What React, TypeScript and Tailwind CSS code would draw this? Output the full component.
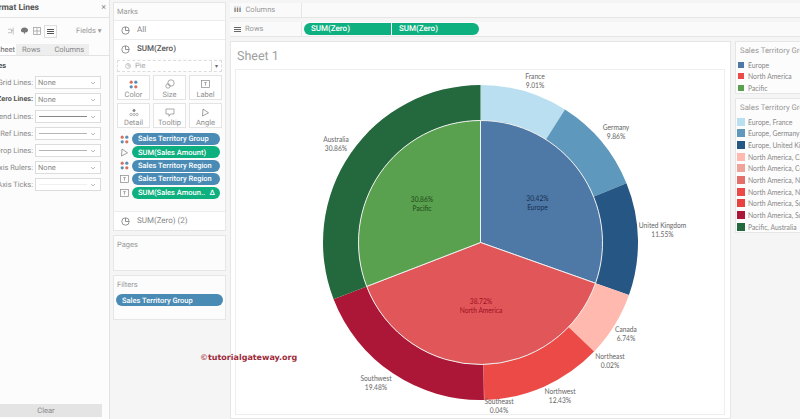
import React from "react";

const font = { fontFamily: '"Roboto","Liberation Sans",sans-serif' };
const narrow = { fontFamily: '"Lato","Roboto",sans-serif' };
const cx = 480.5, cy = 242.5, Ro = 157.5, Ri = 122;

function pt(r: number, pct: number): [number, number] {
  const a = (pct / 100) * 2 * Math.PI;
  return [cx + r * Math.sin(a), cy - r * Math.cos(a)];
}
function ring(p0: number, p1: number, r0: number, r1: number) {
  const [ax, ay] = pt(r1, p0);
  const [bx, by] = pt(r1, p1);
  const large = p1 - p0 > 50 ? 1 : 0;
  if (r0 === 0) return `M${cx} ${cy}L${ax} ${ay}A${r1} ${r1} 0 ${large} 1 ${bx} ${by}Z`;
  const [cx2, cy2] = pt(r0, p1);
  const [dx, dy] = pt(r0, p0);
  return `M${ax} ${ay}A${r1} ${r1} 0 ${large} 1 ${bx} ${by}L${cx2} ${cy2}A${r0} ${r0} 0 ${large} 0 ${dx} ${dy}Z`;
}

const outer: [number, number, string][] = [
  [0, 9.01, "#b9dff0"],
  [9.01, 18.87, "#5f98bd"],
  [18.87, 30.42, "#265683"],
  [30.42, 37.16, "#ffb9ae"],
  [37.16, 37.18, "#e46f6a"],
  [37.18, 49.61, "#ec4a47"],
  [49.61, 49.65, "#e8413f"],
  [49.65, 69.13, "#ad1737"],
  [69.13, 100, "#24683d"],
];
const inner: [number, number, string][] = [
  [0, 30.42, "#4e79a7"],
  [30.42, 69.14, "#e15759"],
  [69.14, 100, "#59a14f"],
];
const labels: [number, number, string, string][] = [
  [535, 76, "France", "9.01%"],
  [616, 127, "Germany", "9.86%"],
  [662.5, 225, "United Kingdom", "11.55%"],
  [626, 329, "Canada", "6.74%"],
  [610, 356, "Northeast", "0.02%"],
  [560, 391, "Northwest", "12.43%"],
  [499, 401, "Southeast", "0.04%"],
  [376, 378, "Southwest", "19.48%"],
  [336, 139, "Australia", "30.86%"],
];
const innerLabels: [number, number, string, string, string][] = [
  [422, 199, "30.86%", "Pacific", "#1f4a1a"],
  [537.5, 198, "30.42%", "Europe", "#16304f"],
  [481, 301, "38.72%", "North America", "#a01020"],
];

function ChartLabel({ x, y, a, b, fill }: { x: number; y: number; a: string; b: string; fill: string }) {
  return (
    <text transform={`translate(${x} 0) scale(0.83 1)`} textAnchor="middle" fontSize="8" fill={fill} style={narrow}>
      <tspan x="0" y={y + 3}>{a}</tspan>
      <tspan x="0" y={y + 12}>{b}</tspan>
    </text>
  );
}

function Clock() {
  return (
    <svg width="9" height="9" viewBox="0 0 9 9" fill="none" stroke="#888" strokeWidth="0.9">
      <circle cx="4.5" cy="4.5" r="3.7" />
      <path d="M4.5 4.5V1M4.5 4.5H8" />
    </svg>
  );
}
function Dots() {
  return (
    <svg width="9" height="9" viewBox="0 0 9 9">
      <circle cx="2.2" cy="2.2" r="1.6" fill="#d9705f" />
      <circle cx="6.8" cy="2.2" r="1.6" fill="#5b8db5" />
      <circle cx="2.2" cy="6.8" r="1.6" fill="#5b8db5" />
      <circle cx="6.8" cy="6.8" r="1.6" fill="#d9705f" />
    </svg>
  );
}
function AngleIcon({ size = 9 }: { size?: number }) {
  return (
    <svg width={size} height={size} viewBox="0 0 9 9" fill="none" stroke="#888" strokeWidth="0.8">
      <path d="M2 1L7.5 4.8L1.5 8Z" />
    </svg>
  );
}
function LabelIcon({ w = 9, h = 8 }: { w?: number; h?: number }) {
  return (
    <svg width={w} height={h} viewBox="0 0 9 8" fill="none" stroke="#888" strokeWidth="0.7">
      <rect x="0.5" y="0.5" width="8" height="7" />
      <path d="M3.2 2.6H5.8M4.5 2.6V5.6" />
    </svg>
  );
}
function Chevron() {
  return (
    <svg width="6" height="4" viewBox="0 0 6 4" fill="none" stroke="#aaa" strokeWidth="0.8" className="ml-auto mr-1">
      <path d="M1 1L3 3L5 1" />
    </svg>
  );
}

function FormatRow({ label, kind, bold }: { label: string; kind: string; bold?: boolean }) {
  return (
    <div className="flex items-center h-[13px] mb-[4px]">
      <div className={`w-[33px] shrink-0 whitespace-nowrap flex justify-end ${bold ? "text-[7.2px] font-bold text-[#555]" : "text-[7.5px] text-[#8a8a8a]"}`}>
        {label}
      </div>
      <div className="ml-[2px] w-[66px] h-[13px] bg-white border border-[#dcdcdc] flex items-center pl-[2px] text-[7.5px] text-[#888]">
        {kind === "none" && <span>None</span>}
        {kind === "dark" && <span className="block w-[48px] h-px bg-[#888] ml-[1px]" />}
        {kind === "mid" && <span className="block w-[48px] h-px bg-[#b5b5b5] ml-[1px]" />}
        {kind === "light" && <span className="block w-[48px] h-px bg-[#f0f0f0] ml-[1px]" />}
        <Chevron />
      </div>
    </div>
  );
}

function MarkCard({ label, icon }: { label: string; icon: React.ReactNode }) {
  return (
    <div className="h-[25px] border border-[#e4e4e4] bg-white flex flex-col items-center pt-[3px] text-[7.5px] text-[#8f8f8f] leading-none gap-[2px]">
      <div className="h-[10px] flex items-center">{icon}</div>
      <div>{label}</div>
    </div>
  );
}

function Pill({ color, icon, label, suffix }: { color: "blue" | "green"; icon: React.ReactNode; label: string; suffix?: string }) {
  return (
    <div className="flex items-center h-[12px] mb-[1.4px]">
      <div className="w-[18px] pl-[6px] shrink-0 flex">{icon}</div>
      <div className={`w-[88px] h-[12px] rounded-full text-white text-[7.5px] font-medium pl-[6px] pr-[5px] flex items-center justify-between leading-none whitespace-nowrap ${color === "blue" ? "bg-[#4a8bb5]" : "bg-[#0fb07f]"}`}>
        <span>{label}</span>
        {suffix && <span>{suffix}</span>}
      </div>
    </div>
  );
}

function LegendRow({ color, label, small }: { color: string; label: string; small?: boolean }) {
  return (
    <div className="flex items-center h-[11.67px] whitespace-nowrap">
      <span className={small ? "w-[6px] h-[6px] ml-[2px] mr-[4px] shrink-0" : "w-[8px] h-[8px] ml-[1px] mr-[3px] shrink-0"} style={{ background: color }} />
      <span className="origin-left scale-x-[0.85]">{label}</span>
    </div>
  );
}

export default function App() {
  return (
    <div className="relative w-[800px] h-[419px] overflow-hidden bg-[#f5f5f5] flex text-[#777] [text-rendering:geometricPrecision]" style={font}>
      {/* Format pane */}
      <div className="w-[110px] shrink-0 h-full bg-[#fcfcfc] border-r border-[#e3e3e3] flex flex-col overflow-hidden">
        <div className="h-[18px] flex items-center justify-between border-b border-[#e3e3e3] pr-[3px]">
          <span className="ml-[-11px] text-[8.5px] font-bold text-[#555] whitespace-nowrap">Format Lines</span>
          <span className="text-[9px] text-[#888] leading-none">×</span>
        </div>
        <div className="h-[26px] flex items-center text-[#999] pl-[8px]">
          <svg width="6" height="8" viewBox="0 0 7 8" fill="none" stroke="#aaa" strokeWidth="0.8">
            <path d="M0 2H4V6H0M4 3.5H6M6 0V8" />
          </svg>
          <svg className="ml-[6px]" width="9" height="10" viewBox="0 0 10 10" fill="#777">
            <path d="M5 1C2.5 1 1 2.5 1 4.5C1 6 2.5 6.5 4 6.5L5 8.5L6 6.5H8L9 4C8.6 2 7 1 5 1Z" />
          </svg>
          <svg className="ml-[4px]" width="8" height="8" viewBox="0 0 8 8" fill="none" stroke="#999" strokeWidth="0.7">
            <rect x="0.5" y="0.5" width="7" height="7" />
            <path d="M4 0.5V7.5M0.5 4H7.5" />
          </svg>
          <div className="ml-[3px] w-[13px] h-[13px] border border-[#ddd] flex flex-col items-center justify-center gap-[1px]">
            <span className="block w-[7px] h-px bg-[#555]" />
            <span className="block w-[7px] h-px bg-[#555]" />
            <span className="block w-[7px] h-px bg-[#555]" />
          </div>
          <span className="ml-[19px] text-[7.5px] whitespace-nowrap">Fields ▾</span>
        </div>
        <div className="h-[12px] flex border-b border-[#e3e3e3] text-[7.5px] text-[#888] leading-none pr-[20px]">
          <div className="w-[16px] bg-white flex items-center justify-end pr-[1px] overflow-hidden">
            <span className="text-[#666]">Sheet</span>
          </div>
          <div className="flex-1 bg-[#eeeeee] flex items-center pl-[6px] gap-[14px]">
            <span>Rows</span>
            <span>Columns</span>
          </div>
        </div>
        <div className="h-[20px] flex items-center">
          <span className="ml-[-12px] text-[7.5px] font-bold text-[#555]">Lines</span>
        </div>
        <div className="flex flex-col">
          <FormatRow label="Grid Lines:" kind="none" />
          <FormatRow label="Zero Lines:" kind="none" bold />
          <FormatRow label="Trend Lines:" kind="dark" />
          <FormatRow label="Ref Lines:" kind="mid" />
          <FormatRow label="Drop Lines:" kind="mid" />
          <FormatRow label="Axis Rulers:" kind="none" />
          <FormatRow label="Axis Ticks:" kind="light" />
        </div>
        <div className="mt-auto mb-[2px] h-[13px] w-[102px] bg-[#e4e4e4] flex items-center justify-center pr-[10px] text-[7.5px] text-[#8a8a8a]">
          Clear
        </div>
      </div>

      {/* Marks column */}
      <div className="w-[119px] shrink-0 pl-[3px] pr-[3px] pt-[2px] flex flex-col gap-[4px]">
        <div className="h-[229px] bg-[#fcfcfc] border border-[#e6e6e6] flex flex-col">
          <div className="h-[17px] flex items-center pl-[3px] text-[7.5px] text-[#999]">Marks</div>
          <div className="h-[19px] border-t border-[#ececec] flex items-center pl-[7px] gap-[7px] text-[8px] text-[#888] bg-white">
            <Clock />
            <span>All</span>
          </div>
          <div className="h-[19px] border-t border-[#ececec] flex items-center pl-[7px] gap-[7px] text-[8px] font-medium text-[#555] bg-white">
            <Clock />
            <span>SUM(Zero)</span>
          </div>
          <div className="mx-[3px] mt-[2px] h-[12px] bg-white border border-dashed border-[#ddd] flex items-center pl-[7px] gap-[4px] text-[7.5px] text-[#aaa]">
            <svg width="6" height="6" viewBox="0 0 9 9" fill="none" stroke="#aaa" strokeWidth="1">
              <circle cx="4.5" cy="4.5" r="3.7" />
              <path d="M4.5 4.5V1M4.5 4.5H8" />
            </svg>
            <span>Pie</span>
            <span className="ml-auto w-[10px] h-full border-l border-[#ddd] flex items-center justify-center text-[6px] text-[#666]">▾</span>
          </div>
          <div className="mx-[3px] mt-[3px] grid grid-cols-3 gap-x-[3px] gap-y-[3px]">
            <MarkCard label="Color" icon={<Dots />} />
            <MarkCard
              label="Size"
              icon={
                <svg width="10" height="10" viewBox="0 0 10 10" fill="none" stroke="#888" strokeWidth="0.7">
                  <circle cx="6" cy="4" r="3.2" />
                  <circle cx="3" cy="7" r="2.2" />
                </svg>
              }
            />
            <MarkCard label="Label" icon={<LabelIcon />} />
            <MarkCard
              label="Detail"
              icon={
                <svg width="10" height="9" viewBox="0 0 10 9" fill="none" stroke="#888" strokeWidth="0.6">
                  <circle cx="5" cy="2.5" r="1.2" fill="#888" />
                  <circle cx="2" cy="6.5" r="1.2" />
                  <circle cx="5" cy="6.5" r="1.2" />
                  <circle cx="8" cy="6.5" r="1.2" />
                </svg>
              }
            />
            <MarkCard
              label="Tooltip"
              icon={
                <svg width="10" height="9" viewBox="0 0 10 9" fill="none" stroke="#888" strokeWidth="0.7">
                  <path d="M1 1H9V6H5.5L4 8.3V6H1Z" />
                </svg>
              }
            />
            <MarkCard label="Angle" icon={<AngleIcon />} />
          </div>
          <div className="mt-[5px] flex flex-col">
            <Pill color="blue" icon={<Dots />} label="Sales Territory Group" />
            <Pill color="green" icon={<AngleIcon />} label="SUM(Sales Amount)" />
            <Pill color="blue" icon={<Dots />} label="Sales Territory Region" />
            <Pill color="blue" icon={<LabelIcon />} label="Sales Territory Region" />
            <Pill color="green" icon={<LabelIcon />} label="SUM(Sales Amoun.." suffix="Δ" />
          </div>
          <div className="mt-auto h-[19px] border-t border-[#ececec] flex items-center pl-[7px] gap-[7px] text-[8px] text-[#888] bg-white">
            <Clock />
            <span>SUM(Zero) (2)</span>
          </div>
        </div>
        <div className="h-[36px] bg-[#fcfcfc] border border-[#e6e6e6] pl-[3px] pt-[3px] text-[7.5px] text-[#999]">Pages</div>
        <div className="h-[45px] bg-[#fcfcfc] border border-[#e6e6e6] px-[2px] pt-[3px] text-[7.5px] text-[#999]">
          <div className="pl-[1px]">Filters</div>
          <div className="mt-[4px] h-[12px] rounded-full bg-[#4a8bb5] text-white text-[7.5px] font-medium pl-[6px] flex items-center leading-none whitespace-nowrap">
            Sales Territory Group
          </div>
        </div>
      </div>

      {/* Main */}
      <div className="flex-1 min-w-0 pt-[3px] pl-[1px] flex flex-col">
        <div className="h-[15px] bg-[#fafafa] border-b border-[#e6e6e6] flex items-center text-[7.5px] text-[#999]">
          <div className="w-[72px] h-full border-r border-[#e6e6e6] flex items-center pl-[4px] gap-[4px]">
            <span className="font-bold text-[#666] tracking-[0.5px]">iii</span>
            <span>Columns</span>
          </div>
        </div>
        <div className="mt-[4px] h-[15px] bg-[#fafafa] border-b border-[#e6e6e6] flex items-center text-[7.5px] text-[#999]">
          <div className="w-[72px] h-full border-r border-[#e6e6e6] flex items-center pl-[4px] gap-[4px]">
            <div className="flex flex-col gap-[1px]">
              <span className="block w-[7px] h-px bg-[#666]" />
              <span className="block w-[7px] h-px bg-[#666]" />
              <span className="block w-[7px] h-px bg-[#666]" />
            </div>
            <span>Rows</span>
          </div>
          <div className="ml-[2px] flex gap-px text-white text-[8px] font-medium">
            <div className="w-[87px] h-[12px] bg-[#0fb07f] rounded-l-full pl-[7px] flex items-center">SUM(Zero)</div>
            <div className="w-[87px] h-[12px] bg-[#0fb07f] rounded-r-full pl-[7px] flex items-center">SUM(Zero)</div>
          </div>
        </div>
        <div className="mt-[4px] flex-1 min-h-0 flex">
          <div className="w-[501px] shrink-0 h-full bg-white border border-[#e6e6e6] flex flex-col pl-[4px] pr-[5px] pb-[3px]">
            <div className="h-[27px] flex items-center pt-[3px] pl-[2px] text-[12.5px] text-[#a0a0a0] leading-none">Sheet 1</div>
            <div className="flex-1 border border-[#eeeeee] relative">
              <svg className="absolute left-[-1px] top-[-1px]" width="492" height="348" viewBox="235 69 492 348">
                {outer.map(([a, b, c]) => (
                  <path key={a} d={ring(a, b, Ri, Ro)} fill={c} />
                ))}
                {inner.map(([a, b, c]) => (
                  <path key={a} d={ring(a, b, 0, Ri)} fill={c} stroke="#eeeeee" strokeWidth="1" />
                ))}
                {labels.map(([x, y, a, b]) => (
                  <ChartLabel key={a} x={x} y={y} a={a} b={b} fill="#666" />
                ))}
                {innerLabels.map(([x, y, a, b, c]) => (
                  <ChartLabel key={b} x={x} y={y} a={a} b={b} fill={c} />
                ))}
              </svg>
            </div>
          </div>
          <div className="flex-1 min-w-0 pl-[4px] flex flex-col gap-[4px] text-[#888] overflow-hidden">
            <div className="h-[53px] bg-[#fcfcfc] border border-[#e6e6e6] border-r-0 pt-[3px]">
              <div className="h-[11px] pl-[4px] flex items-center whitespace-nowrap text-[7.8px] text-[#999]">Sales Territory Group</div>
              <div className="mt-[3px] text-[8px]" style={narrow}>
                <LegendRow small color="#4e79a7" label="Europe" />
                <LegendRow small color="#ec4a47" label="North America" />
                <LegendRow small color="#59a14f" label="Pacific" />
              </div>
            </div>
            <div className="h-[135px] bg-[#fcfcfc] border border-[#e6e6e6] border-r-0 pt-[3px]">
              <div className="h-[11px] pl-[4px] flex items-center whitespace-nowrap text-[7.8px] text-[#999]">Sales Territory Group</div>
              <div className="mt-[3px] text-[8px]" style={narrow}>
                <LegendRow color="#b9dff0" label="Europe, France" />
                <LegendRow color="#5f98bd" label="Europe, Germany" />
                <LegendRow color="#265683" label="Europe, United Kingdom" />
                <LegendRow color="#ffb9ae" label="North America, Canada" />
                <LegendRow color="#f0a39b" label="North America, Central" />
                <LegendRow color="#e46f6a" label="North America, Northeast" />
                <LegendRow color="#ec4a47" label="North America, Northwest" />
                <LegendRow color="#e8413f" label="North America, Southeast" />
                <LegendRow color="#ad1737" label="North America, Southwest" />
                <LegendRow color="#24683d" label="Pacific, Australia" />
              </div>
            </div>
          </div>
        </div>
      </div>

      {/* Watermark */}
      <div className="absolute left-[200px] top-[353px] text-[8px] leading-[10px] font-bold text-[#9c2a3a] whitespace-nowrap" style={{ fontFamily: '"DejaVu Sans",sans-serif' }}>
        <span className="text-[#b5606a]">©</span>tutorialgateway.org
      </div>
    </div>
  );
}
